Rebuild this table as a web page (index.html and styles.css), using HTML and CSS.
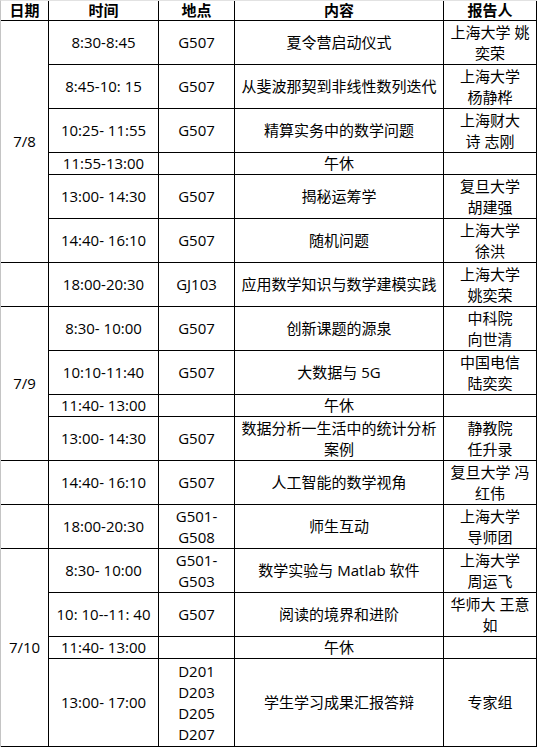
FILE: index.html
```html
<!DOCTYPE html>
<html lang="zh-CN">
<head>
<meta charset="utf-8">
<title>夏令营日程</title>
<link rel="stylesheet" href="styles.css">
</head>
<body>
<table class="schedule">
  <thead>
    <tr class="head">
      <th class="c-date">日期</th>
      <th class="c-time">时间</th>
      <th class="c-place">地点</th>
      <th class="c-topic">内容</th>
      <th class="c-speaker">报告人</th>
    </tr>
  </thead>
  <tbody>
    <tr class="h2">
      <td class="date" rowspan="6">7/8</td>
      <td>8:30-8:45</td><td>G507</td><td>夏令营启动仪式</td><td>上海大学 姚<br>奕荣</td>
    </tr>
    <tr class="h2"><td>8:45-10: 15</td><td>G507</td><td>从斐波那契到非线性数列迭代</td><td>上海大学<br>杨静桦</td></tr>
    <tr class="h2"><td>10:25- 11:55</td><td>G507</td><td>精算实务中的数学问题</td><td>上海财大<br>诗 志刚</td></tr>
    <tr class="h1"><td>11:55-13:00</td><td></td><td>午休</td><td></td></tr>
    <tr class="h2"><td>13:00- 14:30</td><td>G507</td><td>揭秘运筹学</td><td>复旦大学<br>胡建强</td></tr>
    <tr class="h2"><td>14:40- 16:10</td><td>G507</td><td>随机问题</td><td>上海大学<br>徐洪</td></tr>
    <tr class="h2"><td class="date"></td><td>18:00-20:30</td><td>GJ103</td><td>应用数学知识与数学建模实践</td><td>上海大学<br>姚奕荣</td></tr>
    <tr class="h2">
      <td class="date" rowspan="4">7/9</td>
      <td>8:30- 10:00</td><td>G507</td><td>创新课题的源泉</td><td>中科院<br>向世清</td>
    </tr>
    <tr class="h2"><td>10:10-11:40</td><td>G507</td><td>大数据与 5G</td><td>中国电信<br>陆奕奕</td></tr>
    <tr class="h1"><td>11:40- 13:00</td><td></td><td>午休</td><td></td></tr>
    <tr class="h2"><td>13:00- 14:30</td><td>G507</td><td>数据分析一生活中的统计分析<br>案例</td><td>静教院<br>任升录</td></tr>
    <tr class="h2"><td class="date"></td><td>14:40- 16:10</td><td>G507</td><td>人工智能的数学视角</td><td>复旦大学 冯<br>红伟</td></tr>
    <tr class="h2"><td class="date"></td><td>18:00-20:30</td><td>G501-<br>G508</td><td>师生互动</td><td>上海大学<br>导师团</td></tr>
    <tr class="h2">
      <td class="date" rowspan="4">7/10</td>
      <td>8:30- 10:00</td><td>G501-<br>G503</td><td>数学实验与 Matlab 软件</td><td>上海大学<br>周运飞</td>
    </tr>
    <tr class="h2"><td>10: 10--11: 40</td><td>G507</td><td>阅读的境界和进阶</td><td>华师大 王意<br>如</td></tr>
    <tr class="h1"><td>11:40- 13:00</td><td></td><td>午休</td><td></td></tr>
    <tr class="h4"><td>13:00- 17:00</td><td>D201<br>D203<br>D205<br>D207</td><td>学生学习成果汇报答辩</td><td>专家组</td></tr>
  </tbody>
</table>
</body>
</html>
```

FILE: styles.css
```css
html, body {
  margin: 0;
  padding: 0;
  background: #ffffff;
}

body {
  font-family: "Open Sans", "Noto Sans CJK SC", sans-serif;
  font-size: 15px;
  color: #000000;
}

.schedule {
  box-sizing: border-box;
  width: 537px;
  table-layout: fixed;
  border-collapse: separate;
  border-spacing: 0;
  border-left: 1px solid #c4c4c4;
  border-top: 1px solid #e2e2e2;
}

.schedule th,
.schedule td {
  box-sizing: border-box;
  padding: 0 2px;
  border-right: 1px solid #000000;
  border-bottom: 1px solid #000000;
  text-align: center;
  vertical-align: middle;
  line-height: 21px;
  font-weight: normal;
}

.schedule th {
  font-weight: bold;
  height: 20px;
  line-height: 19px;
}

.c-date { width: 48px; }
.c-time { width: 110px; }
.c-place { width: 76px; }
.c-topic { width: 209px; }
.c-speaker { width: 93px; }

.h1 > td { height: 22px; }
.h2 > td { height: 44px; }
.h4 > td { height: 88px; }
```
